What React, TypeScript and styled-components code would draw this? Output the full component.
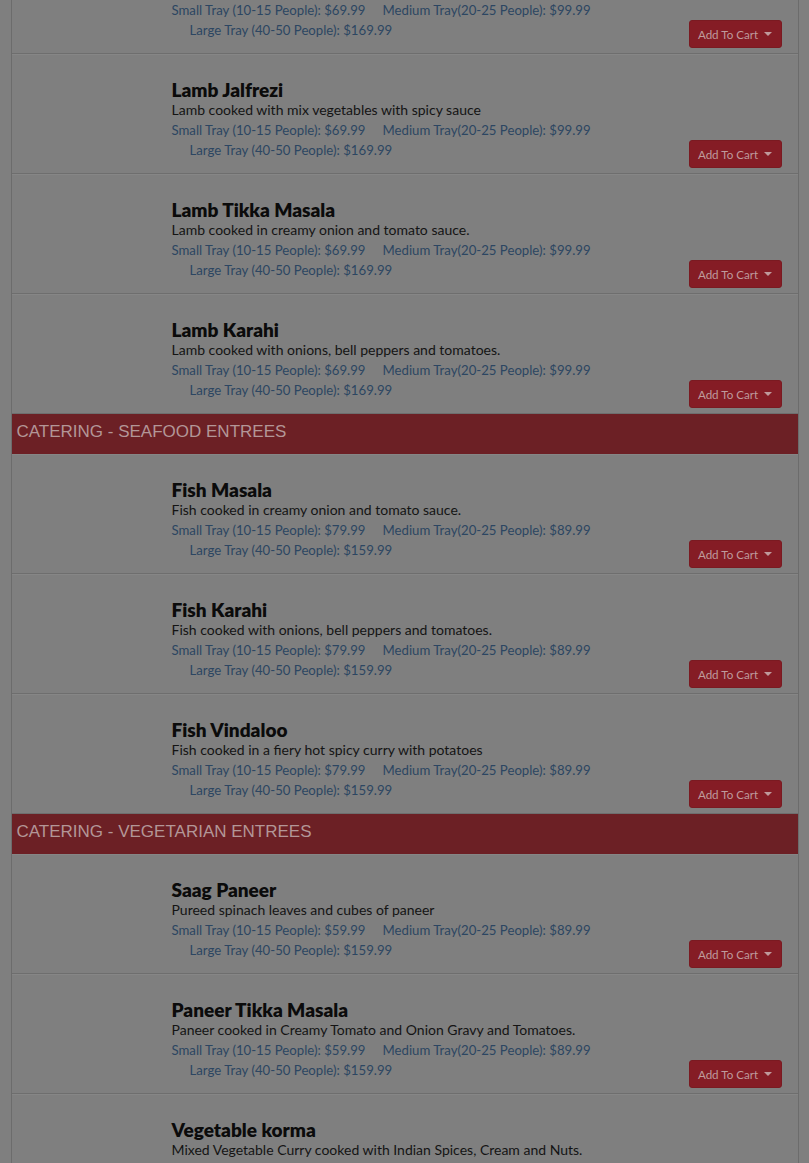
import * as React from 'react';
import styled, { createGlobalStyle } from 'styled-components';

const GlobalStyle = createGlobalStyle`
  html, body {
    margin: 0;
    padding: 0;
    background: #7f7f7f;
    overflow: hidden;
  }
`;

const Page = styled.div`
  display: flex;
  justify-content: center;
  align-items: flex-start;
  height: 1163px;
  overflow: hidden;
`;

const Menu = styled.div`
  width: 786px;
  margin: -66px 0 0 0;
  border-left: 1px solid #6c6c6c;
  border-right: 1px solid #6c6c6c;
  background: #7f7f7f;
  display: flex;
  flex-direction: column;
`;

const SectionHeader = styled.div`
  height: 40px;
  flex-shrink: 0;
  background: #6c2025;
  color: #b39697;
  font-family: 'Liberation Sans', Arial, sans-serif;
  font-size: 17px;
  display: flex;
  align-items: center;
  padding: 0 0 4px 5px;
  box-sizing: border-box;
  text-transform: uppercase;
`;

const Row = styled.div`
  height: 120px;
  flex-shrink: 0;
  box-sizing: border-box;
  display: flex;
  border-top: 1px solid #868686;
  border-bottom: 1px solid #6e6e6e;
`;

const Thumb = styled.div`
  width: 160px;
  flex-shrink: 0;
`;

const Body = styled.div`
  flex: 1;
  padding-top: 25px;
  font-family: 'Source Sans Pro', Lato, sans-serif;
`;

const Title = styled.div`
  font-size: 19px;
  font-weight: 800;
  color: #0b0b0b;
  line-height: 20px;
`;

const Desc = styled.div`
  font-size: 14px;
  color: #141414;
  line-height: 20px;
`;

const PriceLine = styled.div<{ $indent?: boolean }>`
  display: flex;
  gap: 17px;
  font-size: 13.2px;
  line-height: 20px;
  color: #2c4662;
  padding-left: ${(p) => (p.$indent ? '18px' : '0')};
`;

const Side = styled.div`
  width: 109px;
  flex-shrink: 0;
  display: flex;
  align-items: flex-end;
  padding-bottom: 5px;
`;

const CartButton = styled.button`
  width: 93px;
  height: 28px;
  border: 1px solid #7a1a21;
  border-radius: 3px;
  background: #851c25;
  color: #bf9a9c;
  font-family: 'Source Sans Pro', Lato, sans-serif;
  font-size: 11.6px;
  display: flex;
  align-items: center;
  justify-content: center;
  gap: 6px;
  padding: 0;
`;

const Caret = styled.span`
  width: 0;
  height: 0;
  border-left: 4px solid transparent;
  border-right: 4px solid transparent;
  border-top: 4px solid #bf9a9c;
`;

type Item = { name: string; desc: string; prices: [string, string, string] };

const lamb: [string, string, string] = ['$69.99', '$99.99', '$169.99'];
const fish: [string, string, string] = ['$79.99', '$89.99', '$159.99'];
const veg: [string, string, string] = ['$59.99', '$89.99', '$159.99'];

const sections: { title?: string; items: Item[] }[] = [
  {
    items: [
      { name: 'Lamb Curry', desc: 'Lamb cooked in traditional curry sauce.', prices: lamb },
      { name: 'Lamb Jalfrezi', desc: 'Lamb cooked with mix vegetables with spicy sauce', prices: lamb },
      { name: 'Lamb Tikka Masala', desc: 'Lamb cooked in creamy onion and tomato sauce.', prices: lamb },
      { name: 'Lamb Karahi', desc: 'Lamb cooked with onions, bell peppers and tomatoes.', prices: lamb },
    ],
  },
  {
    title: 'Catering - Seafood Entrees',
    items: [
      { name: 'Fish Masala', desc: 'Fish cooked in creamy onion and tomato sauce.', prices: fish },
      { name: 'Fish Karahi', desc: 'Fish cooked with onions, bell peppers and tomatoes.', prices: fish },
      { name: 'Fish Vindaloo', desc: 'Fish cooked in a fiery hot spicy curry with potatoes', prices: fish },
    ],
  },
  {
    title: 'Catering - Vegetarian Entrees',
    items: [
      { name: 'Saag Paneer', desc: 'Pureed spinach leaves and cubes of paneer', prices: veg },
      { name: 'Paneer Tikka Masala', desc: 'Paneer cooked in Creamy Tomato and Onion Gravy and Tomatoes.', prices: veg },
      { name: 'Vegetable korma', desc: 'Mixed Vegetable Curry cooked with Indian Spices, Cream and Nuts.', prices: veg },
    ],
  },
];

function MenuRow({ item }: { item: Item }) {
  return (
    <Row>
      <Thumb />
      <Body>
        <Title>{item.name}</Title>
        <Desc>{item.desc}</Desc>
        <PriceLine>
          <span>Small Tray (10-15 People): {item.prices[0]}</span>
          <span>Medium Tray(20-25 People): {item.prices[1]}</span>
        </PriceLine>
        <PriceLine $indent>
          <span>Large Tray (40-50 People): {item.prices[2]}</span>
        </PriceLine>
      </Body>
      <Side>
        <CartButton>
          Add To Cart <Caret />
        </CartButton>
      </Side>
    </Row>
  );
}

export default function App() {
  return (
    <Page>
      <GlobalStyle />
      <Menu>
        {sections.map((s, i) => (
          <React.Fragment key={i}>
            {s.title && <SectionHeader>{s.title}</SectionHeader>}
            {s.items.map((it) => (
              <MenuRow key={it.name} item={it} />
            ))}
          </React.Fragment>
        ))}
      </Menu>
    </Page>
  );
}
